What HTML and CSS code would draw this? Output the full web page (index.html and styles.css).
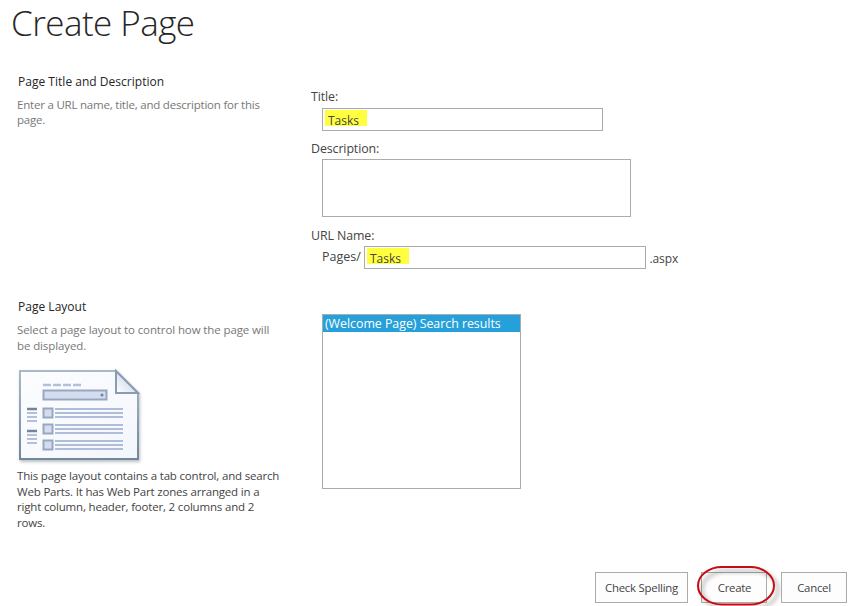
FILE: index.html
```html
<!DOCTYPE html>
<html lang="en">
<head>
<meta charset="utf-8">
<title>Create Page</title>
<link rel="stylesheet" href="styles.css">
</head>
<body>
<h1>Create Page</h1>
<main>
  <section class="row details">
    <div class="info">
      <h2>Page Title and Description</h2>
      <p class="hint title-hint">Enter a URL name, title, and description for this<br>page.</p>
    </div>
    <div class="fields">
      <div class="label">Title:</div>
      <div class="input title-input"><span class="mark">Tasks</span></div>
      <div class="label desc-label">Description:</div>
      <div class="input desc-input"></div>
      <div class="label url-label">URL Name:</div>
      <div class="url-row">
        <span class="prefix">Pages/</span>
        <div class="input url-input"><span class="mark">Tasks</span></div>
        <span class="suffix">.aspx</span>
      </div>
    </div>
  </section>
  <section class="row layout">
    <div class="info">
      <h2 class="layout-heading">Page Layout</h2>
      <p class="hint">Select a page layout to control how the page will<br>be displayed.</p>
      <svg class="preview" width="130" height="100" viewBox="0 0 130 100">
        <defs>
          <linearGradient id="paper" x1="0" y1="0" x2="1" y2="1"><stop offset="0" stop-color="#fdfdff"/><stop offset="1" stop-color="#f3f6fc"/></linearGradient>
          <linearGradient id="edge" x1="0" y1="0" x2="0" y2="1"><stop offset="0" stop-color="#a9b9cc"/><stop offset="1" stop-color="#72879b"/></linearGradient>
          <linearGradient id="fold" x1="0" y1="1" x2="1" y2="0"><stop offset="0" stop-color="#fff"/><stop offset="1" stop-color="#b9c9e1"/></linearGradient>
          <filter id="shade" x="-10%" y="-10%" width="120%" height="125%"><feDropShadow dx="1" dy="2" stdDeviation="1.5" flood-color="#53606b" flood-opacity=".4"/></filter>
        </defs>
        <path d="M5 6H101L123 28V94H5Z" fill="url(#paper)" stroke="url(#edge)" stroke-width="2" filter="url(#shade)"/>
        <path d="M101 6V28H123Z" fill="url(#fold)" stroke="#899cb2" stroke-width="2"/>
        <path d="M28 20H36M38 20H46M48 20H56M58 20H66" stroke="#b3c0dc" stroke-width="2.4"/>
        <rect x="28.5" y="25.5" width="63" height="9" fill="#d4ddf0" stroke="#98a7bd" stroke-width="2"/>
        <circle cx="87" cy="30" r="1.6" fill="#74879d"/>
        <path d="M12 44H22M12 66H22" stroke="#71869a" stroke-width="2.4"/>
        <path d="M12 48H22M12 52H22M12 56H22M12 70H22M12 74H22M12 78H22" stroke="#b3c0dc" stroke-width="2"/>
        <g fill="#d4ddf0" stroke="#98a7bd" stroke-width="2"><path d="M28.5 43.5h9v9h-9zM28.5 59.5h9v9h-9zM28.5 75.5h9v9h-9z"/></g>
        <path d="M40 44H108M40 48H108M40 52H108M40 60H108M40 64H108M40 68H108M40 76H108M40 80H108M40 84H108" stroke="#adbdda" stroke-width="2.2"/>
      </svg>
      <p class="summary">This page layout contains a tab control, and search<br>Web Parts. It has Web Part zones arranged in a<br>right column, header, footer, 2 columns and 2<br>rows.</p>
    </div>
    <div class="listbox"><div class="option">(Welcome Page) Search results</div></div>
  </section>
</main>
<footer>
  <div class="button spelling"><span>Check Spelling</span></div>
  <div class="button create"><span>Create</span>
    <svg class="ring" width="96" height="48" viewBox="0 0 96 48">
      <defs><filter id="ringshade" x="-10%" y="-10%" width="130%" height="140%"><feDropShadow dx="4" dy="4" stdDeviation="2" flood-color="#000" flood-opacity=".38"/></filter></defs>
      <rect x="6" y="5" width="76" height="37.5" rx="24" ry="18.7" fill="none" stroke="#c50b12" stroke-width="2" filter="url(#ringshade)"/>
    </svg>
  </div>
  <div class="button cancel"><span>Cancel</span></div>
</footer>
</body>
</html>
```
FILE: styles.css
```css
* { box-sizing: border-box; }
html, body { margin: 0; height: 606px; overflow: hidden; }
body {
  display: flex;
  flex-direction: column;
  background: #fff;
  color: #444;
  font: 12px/18px "Open Sans", "Noto Sans", sans-serif;
}
h1, h2, p { margin: 0; }
h1 {
  height: 66px;
  padding: 0 0 0 11px;
  color: #262626;
  font-size: 35px;
  font-weight: 300;
  line-height: 45px;
  letter-spacing: -0.55px;
}
main { flex: none; height: 506px; }
.row { display: grid; grid-template-columns: 310px 1fr; }
.details { height: 225px; }
.info { padding: 7px 0 0 17px; }
h2 {
  padding-left: 1px;
  color: #262626;
  font-size: 12px;
  font-weight: 400;
  line-height: 18px;
  letter-spacing: 0.02px;
}
.hint, .summary { font-size: 11.5px; line-height: 15.6px; white-space: nowrap; }
.hint { margin-top: 6px; color: #777; letter-spacing: -0.11px; }
.title-hint { line-height: 15px; letter-spacing: -0.21px; }
.summary { margin-top: 3px; color: #444; letter-spacing: -0.18px; }
.fields { padding-top: 22px; }
.label { height: 18px; padding-left: 1px; font-size: 12.4px; letter-spacing: -0.1px; }
.input { border: 1px solid #ababab; background: #fff; }
.title-input { width: 281px; height: 23px; margin: 2px 0 0 12px; padding: 1px 2px; }
.desc-label { height: 17px; margin-top: 9px; }
.desc-input { width: 309px; height: 58px; margin: 2px 0 0 12px; }
.url-label { margin-top: 10px; }
.url-row { display: flex; margin: 1px 0 0 12px; }
.prefix { width: 42px; padding-top: 2px; font-size: 12.5px; }
.url-input { width: 282px; height: 23px; padding: 1px 2px; }
.suffix { padding: 4px 0 0 3.5px; letter-spacing: -0.1px; }
.mark {
  display: block;
  width: 42px;
  height: 16px;
  padding-left: 3px;
  background: #ffff40;
  line-height: 22px;
}
.preview { display: block; margin: 12px 0 0 -2px; }
.listbox {
  width: 199px;
  height: 175px;
  margin: 23px 0 0 12px;
  border: 1px solid #ababab;
}
.option {
  height: 17px;
  padding-left: 2px;
  background: #26a0da;
  color: #fff;
  font-size: 12.4px;
  letter-spacing: -0.03px;
  line-height: 17px;
  white-space: nowrap;
}
footer { display: flex; flex: none; justify-content: flex-end; padding-right: 12px; }
.button {
  position: relative;
  height: 31px;
  border: 1px solid #ababab;
  background: #fdfdfd;
  font-size: 11.4px;
  letter-spacing: -0.25px;
  line-height: 30px;
  text-align: center;
}
.spelling { width: 93px; }
.create { width: 66px; margin: 0 14px 0 13px; padding-left: 1px; }
.cancel { width: 66px; }
.ring { position: absolute; left: -10px; top: -11px; }
```
